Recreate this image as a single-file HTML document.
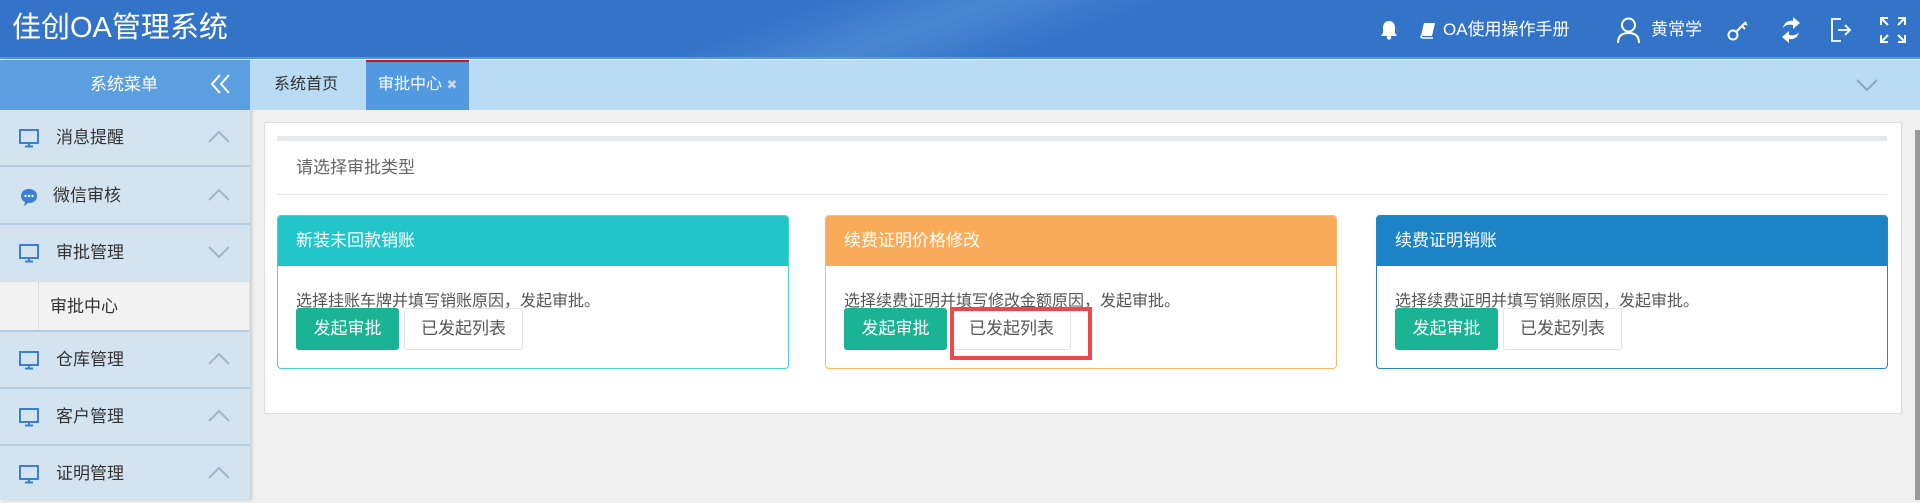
<!DOCTYPE html>
<html><head><meta charset="utf-8"><style>
*{margin:0;padding:0;box-sizing:border-box}
body{width:1920px;height:500px;overflow:hidden;background:#f0f0f0;font-family:"Liberation Sans","Noto Sans CJK SC",sans-serif;position:relative}
.abs{position:absolute}
#hd{left:0;top:0;width:1920px;height:59px;background:linear-gradient(160deg,#3474c8 0%,#3474c8 40%,#4a87d2 48%,#3474c8 56%,#3474c8 100%);border-bottom:2px solid #5c95d8}
#title{left:12px;top:9px;color:#fff;font-size:29px;line-height:38px}
.w{color:#fff;font-size:17px;line-height:20px}
#side{left:0;top:60px;width:250px;height:440px;background:#d3e4f0;box-shadow:2px 0 3px rgba(0,0,0,.15)}
#sth{left:0;top:0;width:250px;height:50px;background:#5b9fe0;color:#fff;font-size:17px;line-height:50px}
.it{left:0;width:250px;height:57px;border-bottom:2px solid #b5cce0;font-size:17px;color:#333}
.it span{position:absolute;left:56px;top:0;line-height:55px}
.it svg.ic{position:absolute;left:18px;top:18px}
.it svg.ch{position:absolute;left:208px;top:20px}
#tabs{left:250px;top:60px;width:1670px;height:50px;background:#b9dbf4}
#panel{left:264px;top:122px;width:1638px;height:292px;background:#fff;border:1px solid #ddd}
.card{top:215px;width:512px;height:154px;border:1px solid;border-radius:4px;background:#fff;overflow:hidden}
.card .h{height:50px;color:#fff;font-size:17px;line-height:50px;padding-left:18px}
.card .d{position:absolute;left:18px;top:71px;font-size:16px;color:#555}
.b1{position:absolute;left:18px;top:92px;width:103px;height:42px;background:#1ab394;color:#fff;font-size:17px;line-height:42px;text-align:center;border-radius:3px}
.b2{position:absolute;left:126px;top:92px;width:119px;height:42px;background:#fff;border:1px solid #e3e3e3;color:#555;font-size:17px;line-height:40px;text-align:center;border-radius:3px}
</style></head><body>
<div id="hd" class="abs"></div>
<div id="title" class="abs">佳创OA管理系统</div>
<svg class="abs" style="left:1380px;top:20px" width="18" height="20" viewBox="0 0 18 20"><path d="M9 1c-4 0-6 3-6 7v5l-2 3h16l-2-3V8c0-4-2-7-6-7z" fill="#fff"/><circle cx="9" cy="17.5" r="2.2" fill="#fff"/></svg>
<svg class="abs" style="left:1420px;top:22px" width="16" height="17" viewBox="0 0 16 17"><path d="M4 1h11l-3 13H1z" fill="#fff"/><path d="M1 14c0 2 1 2 2 2h10" stroke="#fff" stroke-width="1.5" fill="none"/></svg>
<div class="abs w" style="left:1443px;top:20px">OA使用操作手册</div>
<svg class="abs" style="left:1616px;top:17px" width="25" height="26" viewBox="0 0 25 26"><circle cx="12.5" cy="8" r="6.5" stroke="#fff" stroke-width="2" fill="none"/><path d="M2 26c0-7 4-10 10.5-10S23 19 23 26" stroke="#fff" stroke-width="2" fill="none"/></svg>
<div class="abs w" style="left:1651px;top:20px">黄常学</div>
<svg class="abs" style="left:1727px;top:19px" width="22" height="22" viewBox="0 0 22 22"><circle cx="6" cy="16" r="4.5" stroke="#fff" stroke-width="2" fill="none"/><path d="M9 13l10-10M15 7l3 3M18 4l2 2" stroke="#fff" stroke-width="2" fill="none"/></svg>
<svg class="abs" style="left:1779px;top:15px" width="24" height="30" viewBox="0 0 24 30"><path d="M4 13c1-5 5-8 10-7V2l7 6-7 6v-4c-4-1-8 0-10 3z" fill="#fff"/><path d="M20 17c-1 5-5 8-10 7v4l-7-6 7-6v4c4 1 8 0 10-3z" fill="#fff"/></svg>
<svg class="abs" style="left:1830px;top:18px" width="22" height="24" viewBox="0 0 22 24"><path d="M11 1H2v22h9" stroke="#fff" stroke-width="1.8" fill="none"/><path d="M8 12h12M15 7l5 5-5 5" stroke="#fff" stroke-width="1.8" fill="none"/></svg>
<svg class="abs" style="left:1880px;top:17px" width="26" height="26" viewBox="0 0 26 26" stroke="#fff" stroke-width="2" fill="none"><path d="M1 8V1h7M1 1l7 7M25 8V1h-7M25 1l-7 7M1 18v7h7M1 25l7-7M25 18v7h-7M25 25l-7-7"/></svg>

<div id="side" class="abs">
<div id="sth" class="abs"><span style="position:absolute;left:90px">系统菜单</span></div>
<svg class="abs" style="left:210px;top:14px" width="22" height="20" viewBox="0 0 22 20" stroke="#fff" stroke-width="2" fill="none"><path d="M10 1L2 10l8 9M19 1l-8 9 8 9"/></svg>
</div>
<div class="abs it" style="top:110px"><svg class="ic" width="22" height="20" viewBox="0 0 22 20"><rect x="2" y="2" width="18" height="13" stroke="#3b7fd4" stroke-width="2" fill="none"/><path d="M11 15v3M7 18.5h8" stroke="#3b7fd4" stroke-width="2"/></svg><span>消息提醒</span><svg class="ch" width="22" height="14" viewBox="0 0 22 14"><path d="M1 12L11 2l10 10" stroke="#9fb4c8" stroke-width="2" fill="none"/></svg></div>
<div class="abs it" style="top:168px"><svg class="ic" width="22" height="22" viewBox="0 0 22 22"><path d="M11 3c-5 0-8 3-8 7 0 3 2 5 4 6l-1 4 4-3h1c5 0 8-3 8-7s-3-7-8-7z" fill="#3b7fd4"/><circle cx="7.5" cy="10" r="1.2" fill="#fff"/><circle cx="11" cy="10" r="1.2" fill="#fff"/><circle cx="14.5" cy="10" r="1.2" fill="#fff"/></svg><span style="left:53px">微信审核</span><svg class="ch" width="22" height="14" viewBox="0 0 22 14"><path d="M1 12L11 2l10 10" stroke="#9fb4c8" stroke-width="2" fill="none"/></svg></div>
<div class="abs it" style="top:225px;border-bottom:none"><svg class="ic" width="22" height="20" viewBox="0 0 22 20"><rect x="2" y="2" width="18" height="13" stroke="#3b7fd4" stroke-width="2" fill="none"/><path d="M11 15v3M7 18.5h8" stroke="#3b7fd4" stroke-width="2"/></svg><span>审批管理</span><svg class="ch" width="22" height="14" viewBox="0 0 22 14"><path d="M1 2l10 10L21 2" stroke="#9fb4c8" stroke-width="2" fill="none"/></svg></div>
<div class="abs" style="left:0;top:282px;width:249px;height:50px;background:#f2f2f2;border-bottom:2px solid #b5cce0"><div class="abs" style="left:38px;top:0;height:50px;border-left:1px dotted #ccc"></div><div class="abs" style="left:50px;top:0;line-height:50px;font-size:17px;color:#333">审批中心</div></div>
<div class="abs it" style="top:332px"><svg class="ic" width="22" height="20" viewBox="0 0 22 20"><rect x="2" y="2" width="18" height="13" stroke="#3b7fd4" stroke-width="2" fill="none"/><path d="M11 15v3M7 18.5h8" stroke="#3b7fd4" stroke-width="2"/></svg><span>仓库管理</span><svg class="ch" width="22" height="14" viewBox="0 0 22 14"><path d="M1 12L11 2l10 10" stroke="#9fb4c8" stroke-width="2" fill="none"/></svg></div>
<div class="abs it" style="top:389px"><svg class="ic" width="22" height="20" viewBox="0 0 22 20"><rect x="2" y="2" width="18" height="13" stroke="#3b7fd4" stroke-width="2" fill="none"/><path d="M11 15v3M7 18.5h8" stroke="#3b7fd4" stroke-width="2"/></svg><span>客户管理</span><svg class="ch" width="22" height="14" viewBox="0 0 22 14"><path d="M1 12L11 2l10 10" stroke="#9fb4c8" stroke-width="2" fill="none"/></svg></div>
<div class="abs it" style="top:446px;border-bottom:none"><svg class="ic" width="22" height="20" viewBox="0 0 22 20"><rect x="2" y="2" width="18" height="13" stroke="#3b7fd4" stroke-width="2" fill="none"/><path d="M11 15v3M7 18.5h8" stroke="#3b7fd4" stroke-width="2"/></svg><span>证明管理</span><svg class="ch" width="22" height="14" viewBox="0 0 22 14"><path d="M1 12L11 2l10 10" stroke="#9fb4c8" stroke-width="2" fill="none"/></svg></div>

<div id="tabs" class="abs">
<div class="abs" style="left:24px;top:0;line-height:50px;font-size:16px;color:#333">系统首页</div>
<div class="abs" style="left:116px;top:0;width:103px;height:50px;background:#5299df;border-top:2px solid #c9151e;color:#fff;font-size:16px;line-height:46px;padding-left:12px">审批中心 <span style="color:#c8d8ea;font-size:13px">✖</span></div>
<svg class="abs" style="left:1606px;top:19px" width="22" height="12" viewBox="0 0 22 12"><path d="M1 1l10 10L21 1" stroke="#8aa4c0" stroke-width="2" fill="none"/></svg>
</div>
<div class="abs" style="left:1915px;top:130px;width:5px;height:370px;background:#9a9a9a"></div>

<div id="panel" class="abs"></div>
<div class="abs" style="left:277px;top:136px;width:1610px;height:5px;background:#e6e9ec"></div>
<div class="abs" style="left:296px;top:156px;font-size:17px;color:#666;line-height:24px">请选择审批类型</div>
<div class="abs" style="left:277px;top:194px;width:1610px;height:1px;background:#e6e6e6"></div>

<div class="abs card" style="left:277px;border-color:#4fd0d2"><div class="h" style="background:#23c6c8">新装未回款销账</div><div class="d">选择挂账车牌并填写销账原因，发起审批。</div><div class="b1">发起审批</div><div class="b2">已发起列表</div></div>
<div class="abs card" style="left:825px;border-color:#f8b86f"><div class="h" style="background:#f8ac59">续费证明价格修改</div><div class="d">选择续费证明并填写修改金额原因，发起审批。</div><div class="b1">发起审批</div><div class="b2">已发起列表</div></div>
<div class="abs card" style="left:1376px;border-color:#2a84c4"><div class="h" style="background:#1c84c6">续费证明销账</div><div class="d">选择续费证明并填写销账原因，发起审批。</div><div class="b1">发起审批</div><div class="b2">已发起列表</div></div>
<div class="abs" style="left:950px;top:307px;width:142px;height:53px;border:4px solid #f04848"></div>
</body></html>
